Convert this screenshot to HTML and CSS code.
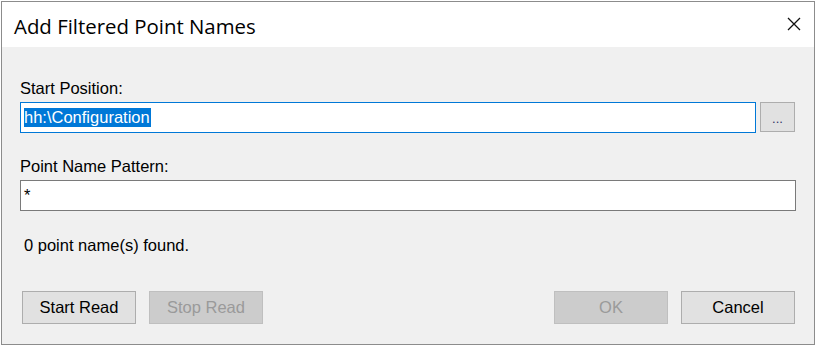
FILE: index.html
```html
<!DOCTYPE html>
<html lang="en">
  <head>
    <meta charset="UTF-8" />
    <meta name="viewport" content="width=device-width, initial-scale=1.0" />
    <title>Add Filtered Point Names</title>
    <link rel="stylesheet" href="styles.css">
  </head>
  <body>
    <div class="window">
      <div class="titlebar">
        <span class="title">Add Filtered Point Names</span>
        <span class="close">
          <svg width="14" height="14" viewBox="0 0 14 14">
            <path d="M1 1 L13 13 M13 1 L1 13" stroke="#111" stroke-width="1.3" fill="none" />
          </svg>
        </span>
      </div>
      <div class="content">
        <label class="field-label">Start Position:</label>
        <div class="row">
          <div class="textbox focused"><span class="selected">hh:\Configuration</span></div>
          <button class="btn browse">...</button>
        </div>
        <label class="field-label second">Point Name Pattern:</label>
        <div class="textbox">*</div>
        <div class="status">0 point name(s) found.</div>
        <div class="buttons">
          <button class="btn">Start Read</button>
          <button class="btn disabled">Stop Read</button>
          <span class="spacer"></span>
          <button class="btn disabled">OK</button>
          <button class="btn">Cancel</button>
        </div>
      </div>
    </div>
  </body>
</html>
```

FILE: styles.css
```css
body {
  margin: 0;
  background-color: #ffffff;
  font-family: "Liberation Sans", Arial, sans-serif;
}

.window {
  margin: 1px 0 0 1px;
  width: 812px;
  height: 342px;
  border: 1px solid #8c8c8c;
  background-color: #f0f0f0;
  display: flex;
  flex-direction: column;
}

.titlebar {
  height: 45px;
  flex-shrink: 0;
  background-color: #ffffff;
  display: flex;
  align-items: center;
  justify-content: space-between;
  padding: 0 13px 0 12px;
}

.title {
  font-family: "Open Sans", "Noto Sans", sans-serif;
  font-size: 20.4px;
  color: #000000;
  margin-top: 3px;
}

.close {
  display: flex;
  margin-top: -1px;
}

.content {
  padding: 32px 18px 0 18px;
  font-size: 16.5px;
  line-height: 19px;
  color: #000000;
  display: flex;
  flex-direction: column;
}

.field-label {
  display: block;
  margin-bottom: 4px;
}

.field-label.second {
  margin-top: 24px;
}

.row {
  display: flex;
  gap: 4px;
  padding-right: 1px;
}

.textbox {
  height: 31px;
  border: 1px solid #7a7a7a;
  background-color: #ffffff;
  box-sizing: border-box;
  padding: 5px 0 0 3px;
  line-height: 19px;
}

.textbox.focused {
  flex: 1;
  border: 1px solid #0078d7;
}

.selected {
  background-color: #0078d7;
  color: #ffffff;
  display: inline-block;
  padding-right: 1px;
}

.status {
  margin: 25px 0 0 4px;
}

.buttons {
  display: flex;
  gap: 13px;
  margin-top: 36px;
  padding: 0 1px 0 2px;
}

.spacer {
  flex: 1;
}

.btn {
  width: 114px;
  height: 33px;
  flex-shrink: 0;
  border: 1px solid #adadad;
  background-color: #e1e1e1;
  font-family: "Liberation Sans", Arial, sans-serif;
  font-size: 16.5px;
  color: #000000;
  padding: 0;
}

.btn.disabled {
  background-color: #cccccc;
  border-color: #bfbfbf;
  color: #9a9a9a;
}

.btn.browse {
  width: 35px;
  height: 30px;
  color: #333366;
  font-size: 13px;
  padding-top: 3px;
}
```
